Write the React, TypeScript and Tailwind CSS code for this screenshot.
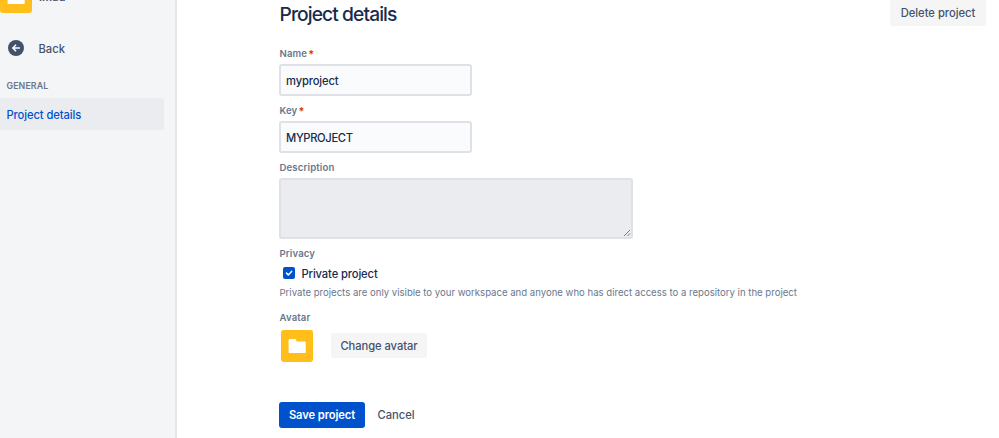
import { ReactNode } from "react";

function FolderAvatar() {
  return (
    <svg width="32" height="32" viewBox="0 0 32 32" className="block shrink-0">
      <rect width="32" height="32" rx="2.4" fill="#ffbe1a" />
      <path
        d="M8.4 9h5.8c.5 0 .9.3 1 .8l.3 1.6h8.2c.6 0 1 .4 1 1v9.7c0 .6-.4 1-1 1H8.6c-.6 0-1-.4-1-1V9.9c0-.5.3-.9.8-.9z"
        fill="#fff"
      />
    </svg>
  );
}

function BackIcon() {
  return (
    <svg width="16" height="16" viewBox="0 0 16 16" className="block shrink-0">
      <circle cx="8" cy="8" r="8" fill="#42526e" />
      <path
        d="M11.4 8H5M7.6 5.2L4.8 8l2.8 2.8"
        fill="none"
        stroke="#fff"
        strokeWidth="1.6"
        strokeLinecap="round"
        strokeLinejoin="round"
      />
    </svg>
  );
}

function Label({ children, required }: { children: ReactNode; required?: boolean }) {
  return (
    <div className="flex h-4 items-center pl-[0.5px] text-[9.6px] leading-4 font-semibold tracking-[0.13px] text-[#6b778c]">
      {children}
      {required && <span className="ml-px text-[11px] text-[#de350b]">*</span>}
    </div>
  );
}

function Sidebar() {
  return (
    <aside className="flex w-[177px] shrink-0 flex-col border-r-2 border-[#e4e6ea] bg-[#f4f5f7]">
      <div className="-mt-[19px] flex h-8 items-center">
        <FolderAvatar />
        <span className="ml-[7px] text-[11.2px] leading-4 font-semibold text-[#42526e]">imad</span>
      </div>
      <a className="mt-[27px] flex h-4 items-center pl-2 text-[11.2px] text-[#42526e]">
        <BackIcon />
        <span className="ml-[14.5px] pt-0.5 font-[450]">Back</span>
      </a>
      <div className="mt-[22px] flex h-4 items-center pl-[6.5px] text-[8.8px] font-semibold tracking-[0.1px] text-[#6b778c]">
        GENERAL
      </div>
      <a className="mt-1 flex h-8 w-[164px] items-center rounded-r-[3px] bg-[#ebecf0] pt-0.5 pl-[6.5px] text-[11.2px] font-[450] tracking-[-0.1px] text-[#0052cc]">
        Project details
      </a>
    </aside>
  );
}

export default function App() {
  return (
    <div className="flex h-[438px] w-[999px] overflow-hidden bg-white font-['Inter',sans-serif] text-[#172b4d]">
      <Sidebar />
      <main className="flex flex-1 flex-col pr-[13px] pl-[102px]">
        <header className="flex h-[26px] items-start justify-between">
          <h1 className="pt-0.5 pl-[0.5px] text-[19.2px] leading-6 font-[550] tracking-[-0.9px]">
            Project details
          </h1>
          <button className="h-[26px] w-24 rounded-b-[3px] bg-[#f5f5f5] text-[11.2px] font-medium text-[#42526e]">
            Delete project
          </button>
        </header>

        <form className="mt-5 flex flex-col items-start">
          <Label required>Name</Label>
          <input
            defaultValue="myproject"
            className="mt-0.5 h-8 w-[193px] rounded-[3px] border-2 border-[#dfe1e6] bg-[#fafbfc] px-[5px] pt-px text-[11.2px] font-[450] tracking-[-0.13px] outline-none"
          />

          <div className="mt-[7px]">
            <Label required>Key</Label>
          </div>
          <input
            defaultValue="MYPROJECT"
            className="mt-0.5 h-8 w-[193px] rounded-[3px] border-2 border-[#dfe1e6] bg-[#fafbfc] px-[5px] pt-px text-[11.2px] font-[450] tracking-[-0.33px] outline-none"
          />

          <div className="mt-[7px]">
            <Label>Description</Label>
          </div>
          <div className="mt-0.5 flex h-[61px] w-[354px] items-end justify-end rounded-[3px] border-2 border-[#dfe1e6] bg-[#ebecf0]">
            <svg width="8" height="8" viewBox="0 0 8 8" className="block">
              <path d="M1 7L7 1M4.5 7L7 4.5" stroke="#5e5e60" strokeWidth="0.8" />
            </svg>
          </div>

          <div className="mt-[7px]">
            <Label>Privacy</Label>
          </div>
          <div className="mt-[3px] flex h-4 items-center pl-1">
            <svg width="12" height="12" viewBox="0 0 12 12" className="block">
              <rect width="12" height="12" rx="2" fill="#0052cc" />
              <path
                d="M3.5 6.1l1.8 1.8 3.3-3.5"
                fill="none"
                stroke="#fff"
                strokeWidth="1.5"
                strokeLinecap="round"
                strokeLinejoin="round"
              />
            </svg>
            <span className="ml-[6.5px] pt-px text-[11.2px] leading-4 font-[450] tracking-[-0.12px]">
              Private project
            </span>
          </div>
          <p className="mt-1 pl-[0.5px] text-[9.6px] leading-4 tracking-[-0.01px] whitespace-nowrap text-[#6b778c]">
            Private projects are only visible to your workspace and anyone who has direct access to a
            repository in the project
          </p>

          <div className="mt-[9px]">
            <Label>Avatar</Label>
          </div>
          <div className="mt-[3.5px] flex items-center pl-0.5">
            <FolderAvatar />
            <button
              type="button"
              className="ml-[18px] h-[25px] w-24 rounded-[3px] bg-[#f5f5f5] pt-px text-[11.2px] font-medium tracking-[-0.07px] text-[#42526e]"
            >
              Change avatar
            </button>
          </div>

          <div className="mt-[40.5px] flex h-[26px] items-center">
            <button
              type="button"
              className="h-[26px] w-[86px] rounded-[3px] bg-[#0052cc] text-[11.2px] font-semibold tracking-[-0.1px] text-white"
            >
              Save project
            </button>
            <button type="button" className="ml-[12.5px] text-[11.2px] font-medium text-[#42526e]">
              Cancel
            </button>
          </div>
        </form>
      </main>
    </div>
  );
}
